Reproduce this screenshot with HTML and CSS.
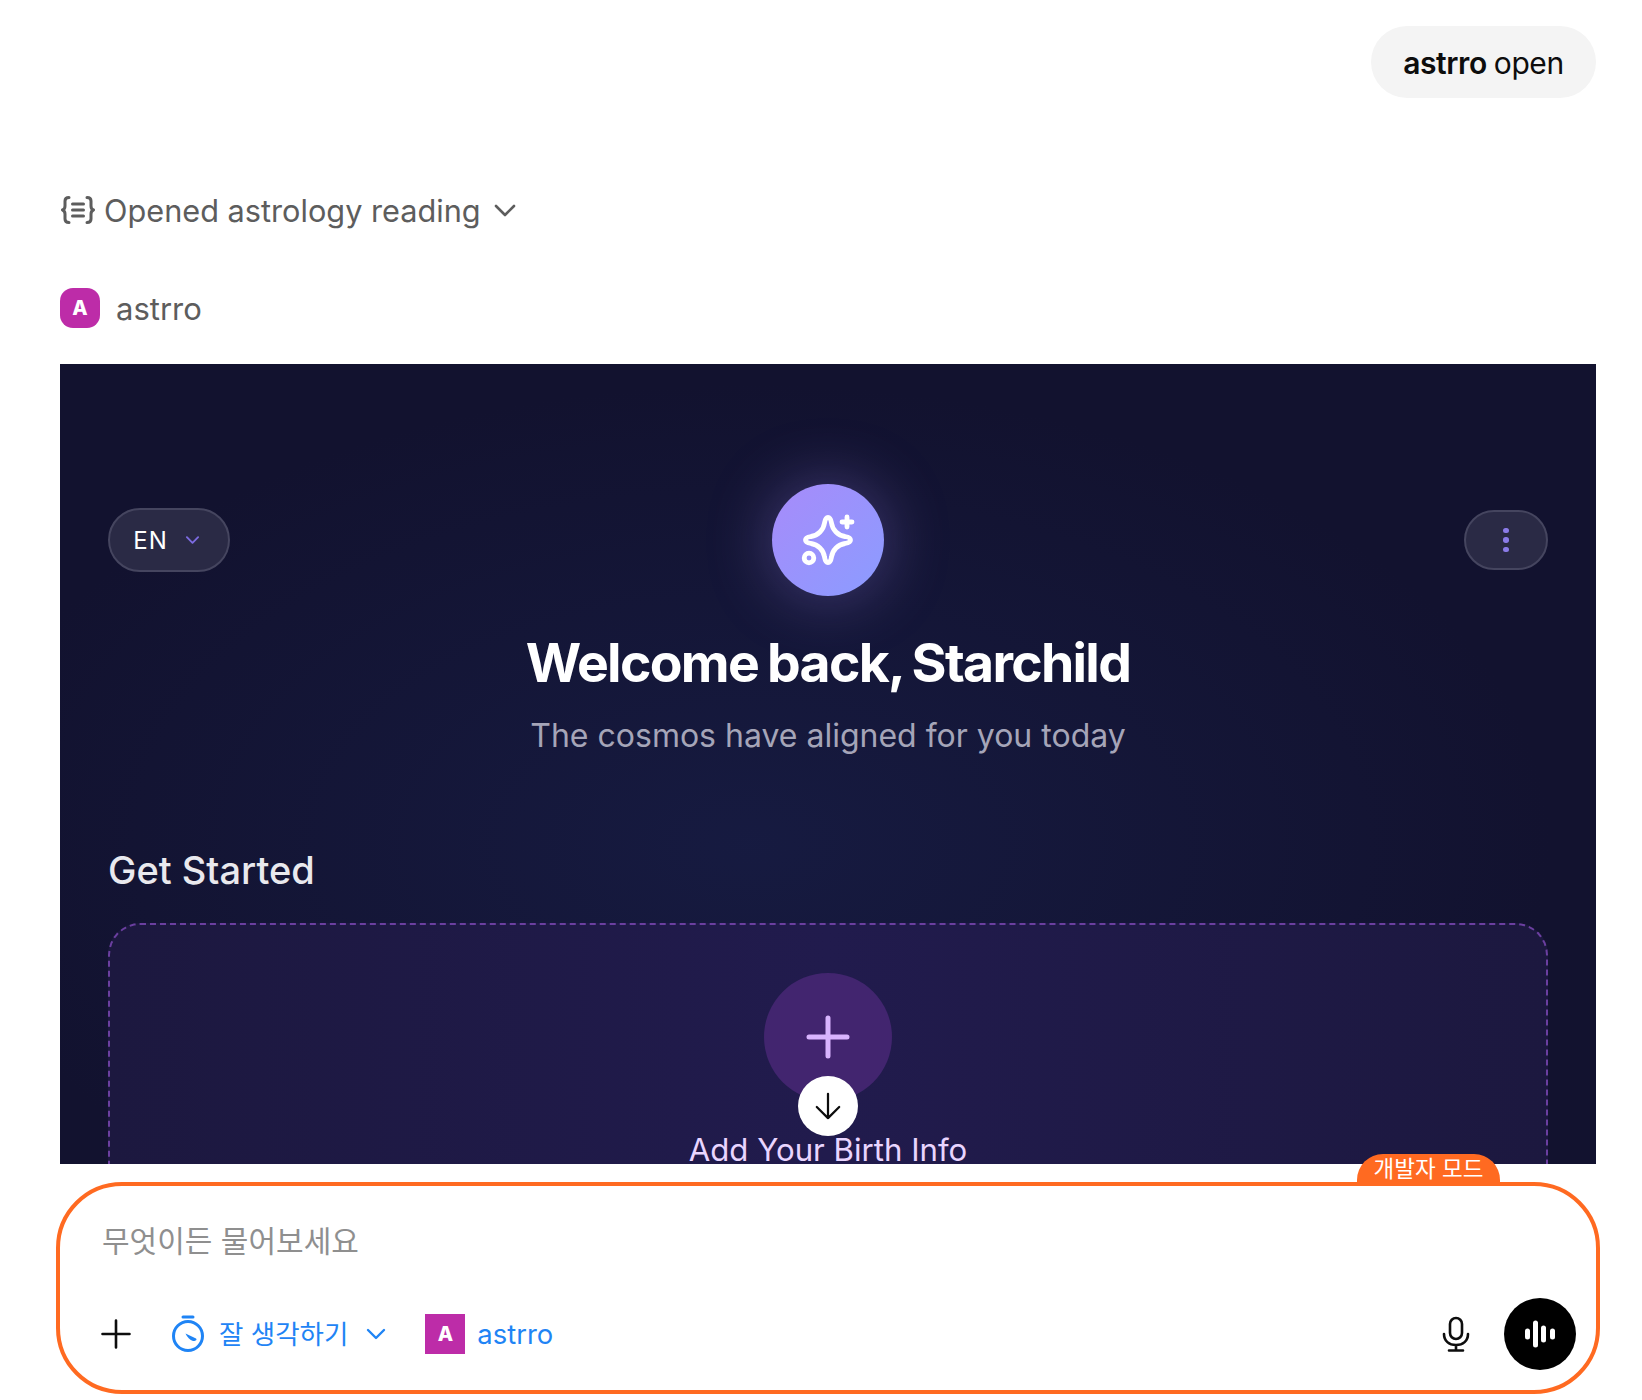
FILE: index.html
```html
<!DOCTYPE html>
<html lang="ko">
  <head>
    <title>astrro open</title>
    <meta charset="utf-8">
    <link rel="stylesheet" href="styles.css">
  </head>

  <body>
    <div class="page">
      <div class="user-row">
        <div class="user-pill"><b>astrro</b> open</div>
      </div>

      <div class="tool-line">
        <svg class="tool-icon" viewBox="0 0 34 30" fill="none" stroke="#5d5d5d" stroke-width="3" stroke-linecap="round" stroke-linejoin="round">
          <path d="M8 2.5c-3 0-4 1.300-4 3.500v5c0 2-1 3.500-2.500 4 1.500.5 2.500 2 2.500 4v5c0 2.200 1 3.500 4 3.500" />
          <path d="M26 2.500c3 0 4 1.300 4 3.500v5c0 2 1 3.500 2.500 4-1.500.5-2.500 2-2.500 4v5c0 2.200-1 3.500-4 3.500" />
          <path d="M11.500 9h11M11.500 15h11M11.500 21h11" />
        </svg>
        <span>Opened astrology reading</span>
        <svg class="tool-chevron" viewBox="0 0 22 14" fill="none" stroke="#5d5d5d" stroke-width="2.600" stroke-linecap="round" stroke-linejoin="round">
          <path d="M2 3l9 9 9-9" />
        </svg>
      </div>

      <div class="app-line">
        <div class="app-avatar">A</div>
        <span>astrro</span>
      </div>

      <div class="frame-wrap">
        <div class="frame">
          <div class="frame-head">
            <div class="lang-btn">
              <span>EN</span>
              <svg viewBox="0 0 16 10" fill="none" stroke="#7c6be0" stroke-width="2" stroke-linecap="round" stroke-linejoin="round">
                <path d="M2 2l6 6 6-6" />
              </svg>
            </div>
            <div class="star-badge">
              <svg viewBox="0 0 56 56" fill="none" stroke="#fff" stroke-width="4.800" stroke-linecap="round" stroke-linejoin="round">
                <path d="M28 5.500C30.500 5.500 31 8 31.500 11C32.500 18 38 23.500 45 24.500C48 25 50.500 25.500 50.500 28C50.500 30.500 48 31 45 31.500C38 32.500 32.500 38 31.500 45C31 48 30.500 50.500 28 50.500C25.500 50.500 25 48 24.500 45C23.500 38 18 32.500 11 31.500C8 31 5.500 30.500 5.500 28C5.500 25.500 8 25 11 24.500C18 23.500 23.500 18 24.500 11C25 8 25.500 5.500 28 5.500z" />
                <path d="M47 5v10M42 10h10" />
                <circle cx="9" cy="46" r="4.800" />
              </svg>
            </div>
            <div class="more-btn">
              <i></i><i></i><i></i>
            </div>
          </div>

          <h1 class="welcome">Welcome back, Starchild</h1>
          <p class="welcome-sub">The cosmos have aligned for you today</p>

          <h2 class="section-title">Get Started</h2>

          <div class="add-card">
            <div class="add-circle">
              <svg viewBox="0 0 44 44" fill="none" stroke="#d8b4fe" stroke-width="5" stroke-linecap="round">
                <path d="M22 3v38M3 22h38" />
              </svg>
            </div>
            <div class="add-label">Add Your Birth Info</div>
          </div>
        </div>

        <div class="scroll-btn">
          <svg viewBox="0 0 30 32" fill="none" stroke="#0d0d0d" stroke-width="2.400" stroke-linecap="round" stroke-linejoin="round">
            <path d="M15 3v26M3 17l12 12 12-12" />
          </svg>
        </div>
      </div>

      <div class="composer">
        <div class="dev-badge">개발자 모드</div>
        <div class="placeholder">무엇이든 물어보세요</div>
        <div class="composer-tools">
          <svg class="plus-icon" viewBox="0 0 30 30" fill="none" stroke="#0d0d0d" stroke-width="2.600" stroke-linecap="round">
            <path d="M15 1.500v27M1.500 15h27" />
          </svg>
          <div class="think-btn">
            <svg class="timer-icon" viewBox="0 0 34 38" fill="none" stroke="#1f84f5" stroke-width="3">
              <circle cx="17" cy="21" r="14.500" />
              <path d="M12 2h10" stroke-linecap="round" />
              <path d="M14.500 18.500L25 23.500C26.500 25 24 26.500 22 26C19 25 16 22 14.500 18.500z" fill="#1f84f5" stroke="none" />
            </svg>
            <span class="think-text">잘 생각하기</span>
            <svg class="think-chevron" viewBox="0 0 20 12" fill="none" stroke="#1f84f5" stroke-width="2.400" stroke-linecap="round" stroke-linejoin="round">
              <path d="M2 2l8 8 8-8" />
            </svg>
          </div>
          <div class="app-chip">
            <div class="chip-avatar">A</div>
            <span>astrro</span>
          </div>
          <svg class="mic-icon" viewBox="0 0 28 36" fill="none" stroke="#0d0d0d" stroke-width="2.600" stroke-linecap="round">
            <rect x="8" y="2" width="12" height="21" rx="6" />
            <path d="M2 18c0 7 5 11 12 11s12-4 12-11M14 29v5M7 34.500h14" />
          </svg>
          <div class="voice-btn">
            <svg viewBox="0 0 32 28" fill="#fff">
              <rect x="1" y="8.500" width="5" height="11" rx="2.500" />
              <rect x="9" y="0.500" width="5" height="27" rx="2.500" />
              <rect x="17" y="5.500" width="5" height="17" rx="2.500" />
              <rect x="26" y="8.500" width="5" height="11" rx="2.500" />
            </svg>
          </div>
        </div>
      </div>
    </div>
  </body>
</html>
```

FILE: styles.css
```css
body,
html {
  margin: 0;
  padding: 0;
  background-color: #fff;
  font-family: Inter, "Noto Sans CJK KR", sans-serif;
}

.page {
  width: 1642px;
  height: 1400px;
  box-sizing: border-box;
  padding: 26px 46px 0 60px;
  overflow: hidden;
}

.user-row {
  display: flex;
  justify-content: flex-end;
}

.user-pill {
  height: 72px;
  width: 225px;
  padding-top: 2px;
  box-sizing: border-box;
  display: flex;
  align-items: center;
  justify-content: center;
  gap: 7px;
  border-radius: 36px;
  background: #f4f4f4;
  font-size: 30px;
  letter-spacing: -0.4px;
  color: #0d0d0d;
}

.user-pill b {
  font-weight: 600;
}

.tool-line {
  display: flex;
  align-items: center;
  height: 44px;
  margin-top: 90px;
  font-size: 30.700px;
  color: #5d5d5d;
}

.tool-icon {
  width: 34px;
  height: 30px;
  margin-left: 1px;
  margin-right: 9px;
}

.tool-chevron {
  width: 22px;
  height: 14px;
  margin-left: 13px;
}

.app-line {
  display: flex;
  align-items: center;
  gap: 16px;
  margin-top: 56px;
  font-size: 31px;
  color: #5d5d5d;
}

.app-avatar {
  width: 40px;
  height: 40px;
  border-radius: 13px;
  background: #bd2ca8;
  color: #fff;
  font-size: 20px;
  font-weight: 800;
  display: flex;
  align-items: center;
  justify-content: center;
}

.frame-wrap {
  position: relative;
  margin-top: 36px;
}

.frame {
  height: 800px;
  box-sizing: border-box;
  padding: 120px 48px 0;
  overflow: hidden;
  background:
    radial-gradient(ellipse 800px 460px at 45% 60%, rgba(24, 30, 72, 0.7), rgba(24, 30, 72, 0) 100%),
    #12122f;
}

.frame-head {
  display: flex;
  align-items: center;
  justify-content: space-between;
  position: relative;
  height: 112px;
}

.lang-btn {
  width: 122px;
  height: 64px;
  box-sizing: border-box;
  padding-right: 5px;
  display: flex;
  align-items: center;
  justify-content: center;
  gap: 17px;
  border: 2px solid #45455f;
  border-radius: 32px;
  background: #2a2a45;
  color: #fff;
  font-size: 24px;
  letter-spacing: 1px;
}

.lang-btn svg {
  width: 15px;
  height: 10px;
}

.star-badge {
  position: absolute;
  left: 664px;
  top: 0;
  width: 112px;
  height: 112px;
  display: flex;
  align-items: center;
  justify-content: center;
  border-radius: 50%;
  background: linear-gradient(135deg, #a78bfa, #8b9cff);
  box-shadow: 0 0 64px rgba(167, 139, 250, 0.35);
}

.star-badge svg {
  width: 56px;
  height: 56px;
}

.more-btn {
  width: 84px;
  height: 60px;
  box-sizing: border-box;
  display: flex;
  flex-direction: column;
  align-items: center;
  justify-content: center;
  gap: 4px;
  border: 2px solid #45455f;
  border-radius: 30px;
  background: #2a2a45;
}

.more-btn i {
  width: 5.500px;
  height: 5.500px;
  border-radius: 50%;
  background: #8b7be8;
}

.welcome {
  margin: 35px 0 0;
  text-align: center;
  font-size: 53.500px;
  line-height: 64px;
  font-weight: 700;
  letter-spacing: -1.700px;
  word-spacing: -2px;
  color: #fff;
}

.welcome-sub {
  margin: 19px 0 0;
  text-align: center;
  font-size: 32px;
  line-height: 44px;
  color: #a5a5b8;
}

.section-title {
  margin: 88px 0 0;
  font-size: 38px;
  line-height: 48px;
  font-weight: 500;
  color: #e9e9ee;
}

.add-card {
  box-sizing: border-box;
  height: 400px;
  margin-top: 29px;
  padding-top: 48px;
  border: 2px dashed #6b3fa0;
  border-radius: 32px;
  background: linear-gradient(90deg, #1c183f, #211b4d 50%, #1c183f);
  display: flex;
  flex-direction: column;
  align-items: center;
}

.add-circle {
  width: 128px;
  height: 128px;
  display: flex;
  align-items: center;
  justify-content: center;
  border-radius: 50%;
  background: #42256f;
}

.add-circle svg {
  width: 44px;
  height: 44px;
}

.add-label {
  margin-top: 27px;
  font-size: 31.200px;
  line-height: 44px;
  color: #e9d5ff;
}

.scroll-btn {
  position: absolute;
  left: 738px;
  top: 712px;
  width: 60px;
  height: 60px;
  display: flex;
  align-items: center;
  justify-content: center;
  border-radius: 50%;
  background: #fff;
}

.scroll-btn svg {
  width: 28px;
  height: 30px;
}

.composer {
  position: relative;
  box-sizing: border-box;
  height: 212px;
  margin: 18px -4px 0;
  padding: 33px 42px 0 42px;
  border: 4px solid #ff6a21;
  border-radius: 66px;
  background: #fff;
}

.dev-badge {
  position: absolute;
  right: 96px;
  top: -32px;
  width: 143px;
  height: 29px;
  border-radius: 26px 26px 0 0;
  background: #ff6a21;
  color: #fff;
  font-size: 22.500px;
  line-height: 29px;
  text-align: center;
}

.placeholder {
  font-size: 30px;
  line-height: 44px;
  color: #8f8f8f;
}

.composer-tools {
  display: flex;
  align-items: center;
  margin-top: 35px;
  margin-right: -22px;
  height: 72px;
}

.plus-icon {
  width: 30px;
  height: 30px;
  margin-left: -1px;
}

.think-btn {
  display: flex;
  align-items: center;
  margin-left: 40px;
  color: #1f84f5;
  font-size: 26.500px;
}

.think-text {
  margin-bottom: 3px;
}

.timer-icon {
  width: 34px;
  height: 38px;
  margin-right: 14px;
}

.think-chevron {
  width: 20px;
  height: 12px;
  margin-left: 18px;
}

.app-chip {
  display: flex;
  align-items: center;
  gap: 12px;
  margin-left: 39px;
  color: #1f84f5;
  font-size: 27.400px;
}

.chip-avatar {
  width: 40px;
  height: 40px;
  background: #bd2ca8;
  color: #fff;
  font-size: 20px;
  font-weight: 800;
  display: flex;
  align-items: center;
  justify-content: center;
}

.mic-icon {
  width: 28px;
  height: 36px;
  margin-left: auto;
  margin-right: 34px;
}

.voice-btn {
  width: 72px;
  height: 72px;
  display: flex;
  align-items: center;
  justify-content: center;
  border-radius: 50%;
  background: #000;
}

.voice-btn svg {
  width: 32px;
  height: 28px;
}
```
